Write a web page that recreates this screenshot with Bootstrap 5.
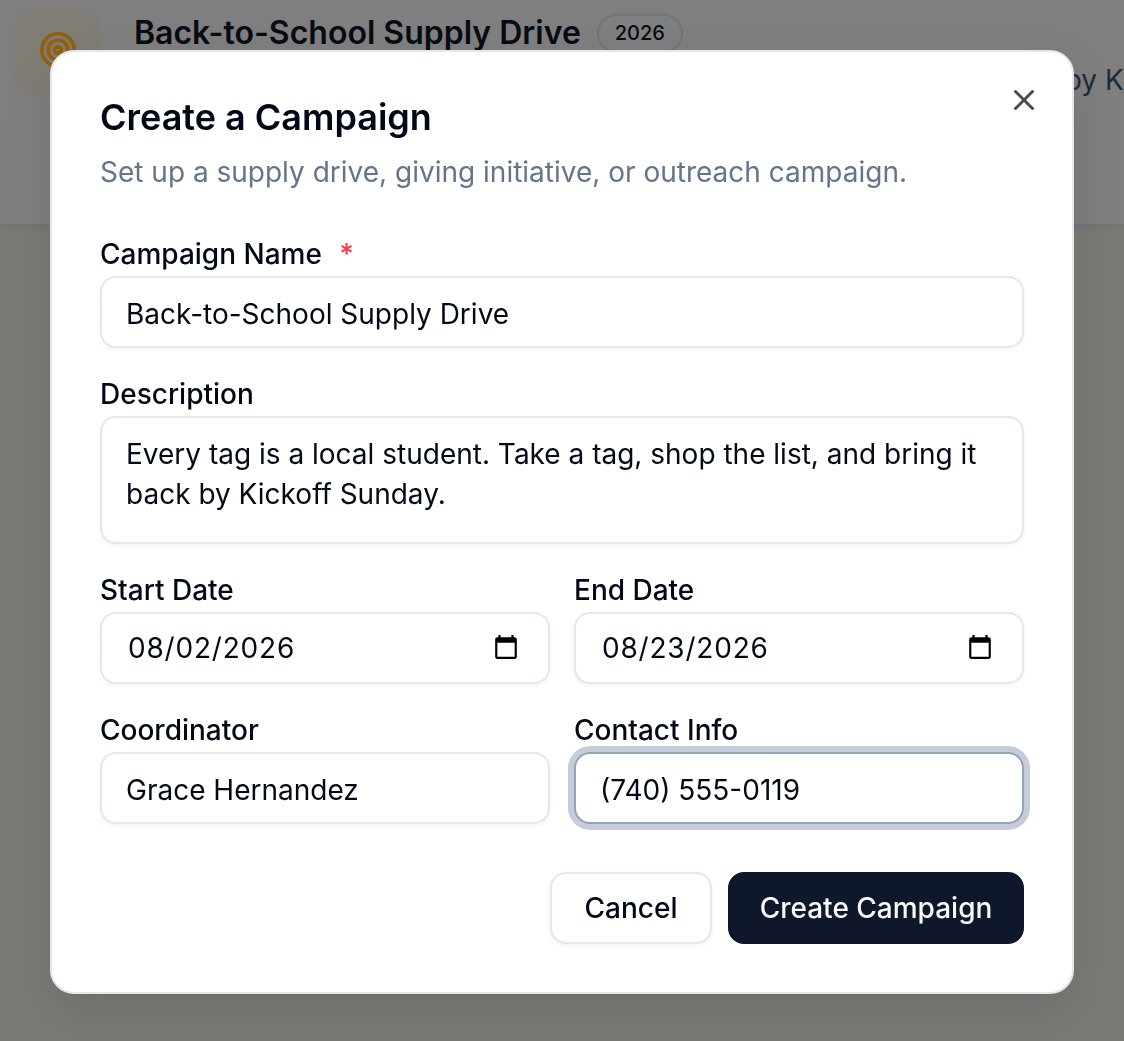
<!DOCTYPE html>
<html lang="en">
<head>
<meta charset="utf-8">
<title>Create a Campaign</title>
<link href="https://cdn.jsdelivr.net/npm/bootstrap@5.3.0/dist/css/bootstrap.min.css" rel="stylesheet">
<style>
html,body{height:100%;overflow:hidden}
body{background:#f6f4ea;font-family:Inter,"Liberation Sans",sans-serif;color:#020817}
.page-head{height:226px;background:#fff;border-bottom:2px solid #e2e8f0;padding:8px 0 0 14px;gap:32px;box-shadow:0 2px 4px rgba(0,0,0,.05);overflow:hidden}
.head-icon{width:88px;height:88px;border-radius:24px;background:#fffbeb;flex:none}
.head-mark{position:relative;z-index:1;margin:0 0 4px}
.head-row{margin-top:5px}
.head-title{font-size:32px;font-weight:600;line-height:40px;margin:0;color:#0f172a;white-space:nowrap}
.head-year{font-size:20px;font-weight:500;line-height:24px;padding:5.5px 16px;border:2px solid #e2e8f0;border-radius:999px;color:#0f172a}
.head-text{font-size:28px;line-height:40px;margin:7px 0 0;color:#475569;white-space:nowrap}
.scrim{position:fixed;inset:0;background:rgba(0,0,0,.5)}
.dialog{position:absolute;z-index:2;left:50px;top:50px;width:1024px;height:944px;background:#fff;border:2px solid #e2e8f0;border-radius:24px;padding:48px;box-shadow:0 20px 50px rgba(0,0,0,.1)}
.dialog-close{position:absolute;right:36px;top:36px;width:24px;height:24px;padding:0;border:0;background:transparent;color:#4a4a58;display:block}
.dialog-title{font-size:36px;font-weight:600;line-height:34px;margin:0;color:#020817}
.dialog-sub{font-size:28px;line-height:40px;margin:18px 0 0;color:#64748b}
.fld-gap{margin-top:26px}
.fld-first{margin-top:42px}
.fld-label{display:block;font-size:28px;font-weight:500;line-height:40px;margin:0 0 2px;color:#020817}
.req{color:#ff3344;margin-left:10px}
.fld{display:block;width:100%;height:72px;font-family:inherit;font-size:28px;line-height:40px;padding:16px 24px 12px;border:2px solid #e2e8f0;border-radius:16px;background:#fff;color:#020817;box-shadow:0 2px 4px rgba(0,0,0,.05);outline:0}
.fld-area{height:128px;padding:16px 24px;resize:none}
.fld-date{padding:14px 26px;letter-spacing:.8px}
.fld-on{border-color:#94a3b8;box-shadow:0 0 0 6px #c5cddb}
.pair{--bs-gutter-x:24px}
.foot{margin-top:48px;gap:16px}
.act{height:72px;font-size:28px;font-weight:500;line-height:40px;border-radius:16px;padding:14px 0}
.act-ghost{width:162px;background:#fff;border:2px solid #e2e8f0;color:#020817;box-shadow:0 2px 4px rgba(0,0,0,.05)}
.act-main{width:296px;background:#0f172a;border:2px solid #0f172a;color:#f8fafc}
</style>
</head>
<body>
<header class="page-head d-flex">
  <div class="head-icon d-flex align-items-center justify-content-center">
    <svg class="head-mark" width="40" height="40" viewBox="0 0 40 40" fill="none" stroke="#96600a" stroke-width="3.6"><circle cx="20" cy="20" r="16.2"/><circle cx="20" cy="20" r="9.8"/><circle cx="20" cy="20" r="3.4"/></svg>
  </div>
  <div>
    <div class="head-row d-flex align-items-center gap-3">
      <h1 class="head-title">Back-to-School Supply Drive</h1>
      <span class="head-year">2026</span>
    </div>
    <p class="head-text">Every tag is a local student. Take a tag, shop the list, and bring it back by Kickoff Sunday.</p>
  </div>
</header>
<div class="scrim"></div>
<div class="dialog" role="dialog" aria-modal="true">
  <button type="button" class="dialog-close" aria-label="Close">
    <svg class="d-block" width="24" height="24" viewBox="0 0 24 24" fill="none" stroke="currentColor" stroke-width="3" stroke-linecap="round"><path d="M3.5 3.5 20.5 20.5M20.5 3.5 3.5 20.5"/></svg>
  </button>
  <h2 class="dialog-title">Create a Campaign</h2>
  <p class="dialog-sub">Set up a supply drive, giving initiative, or outreach campaign.</p>
  <form>
    <div class="fld-first">
      <label class="fld-label" for="n">Campaign Name <span class="req">*</span></label>
      <input class="fld" id="n" type="text" value="Back-to-School Supply Drive">
    </div>
    <div class="fld-gap">
      <label class="fld-label" for="d">Description</label>
      <textarea class="fld fld-area" id="d">Every tag is a local student. Take a tag, shop the list, and bring it back by Kickoff Sunday.</textarea>
    </div>
    <div class="row pair fld-gap">
      <div class="col-6">
        <label class="fld-label" for="s">Start Date</label>
        <input class="fld fld-date" id="s" type="date" value="2026-08-02">
      </div>
      <div class="col-6">
        <label class="fld-label" for="e">End Date</label>
        <input class="fld fld-date" id="e" type="date" value="2026-08-23">
      </div>
    </div>
    <div class="row pair fld-gap">
      <div class="col-6">
        <label class="fld-label" for="c">Coordinator</label>
        <input class="fld" id="c" type="text" value="Grace Hernandez">
      </div>
      <div class="col-6">
        <label class="fld-label" for="i">Contact Info</label>
        <input class="fld fld-on" id="i" type="text" value="(740) 555-0119">
      </div>
    </div>
    <div class="foot d-flex justify-content-end">
      <button type="button" class="btn act act-ghost">Cancel</button>
      <button type="button" class="btn act act-main">Create Campaign</button>
    </div>
  </form>
</div>
<script src="https://cdn.jsdelivr.net/npm/bootstrap@5.3.0/dist/js/bootstrap.bundle.min.js"></script>
</body>
</html>
